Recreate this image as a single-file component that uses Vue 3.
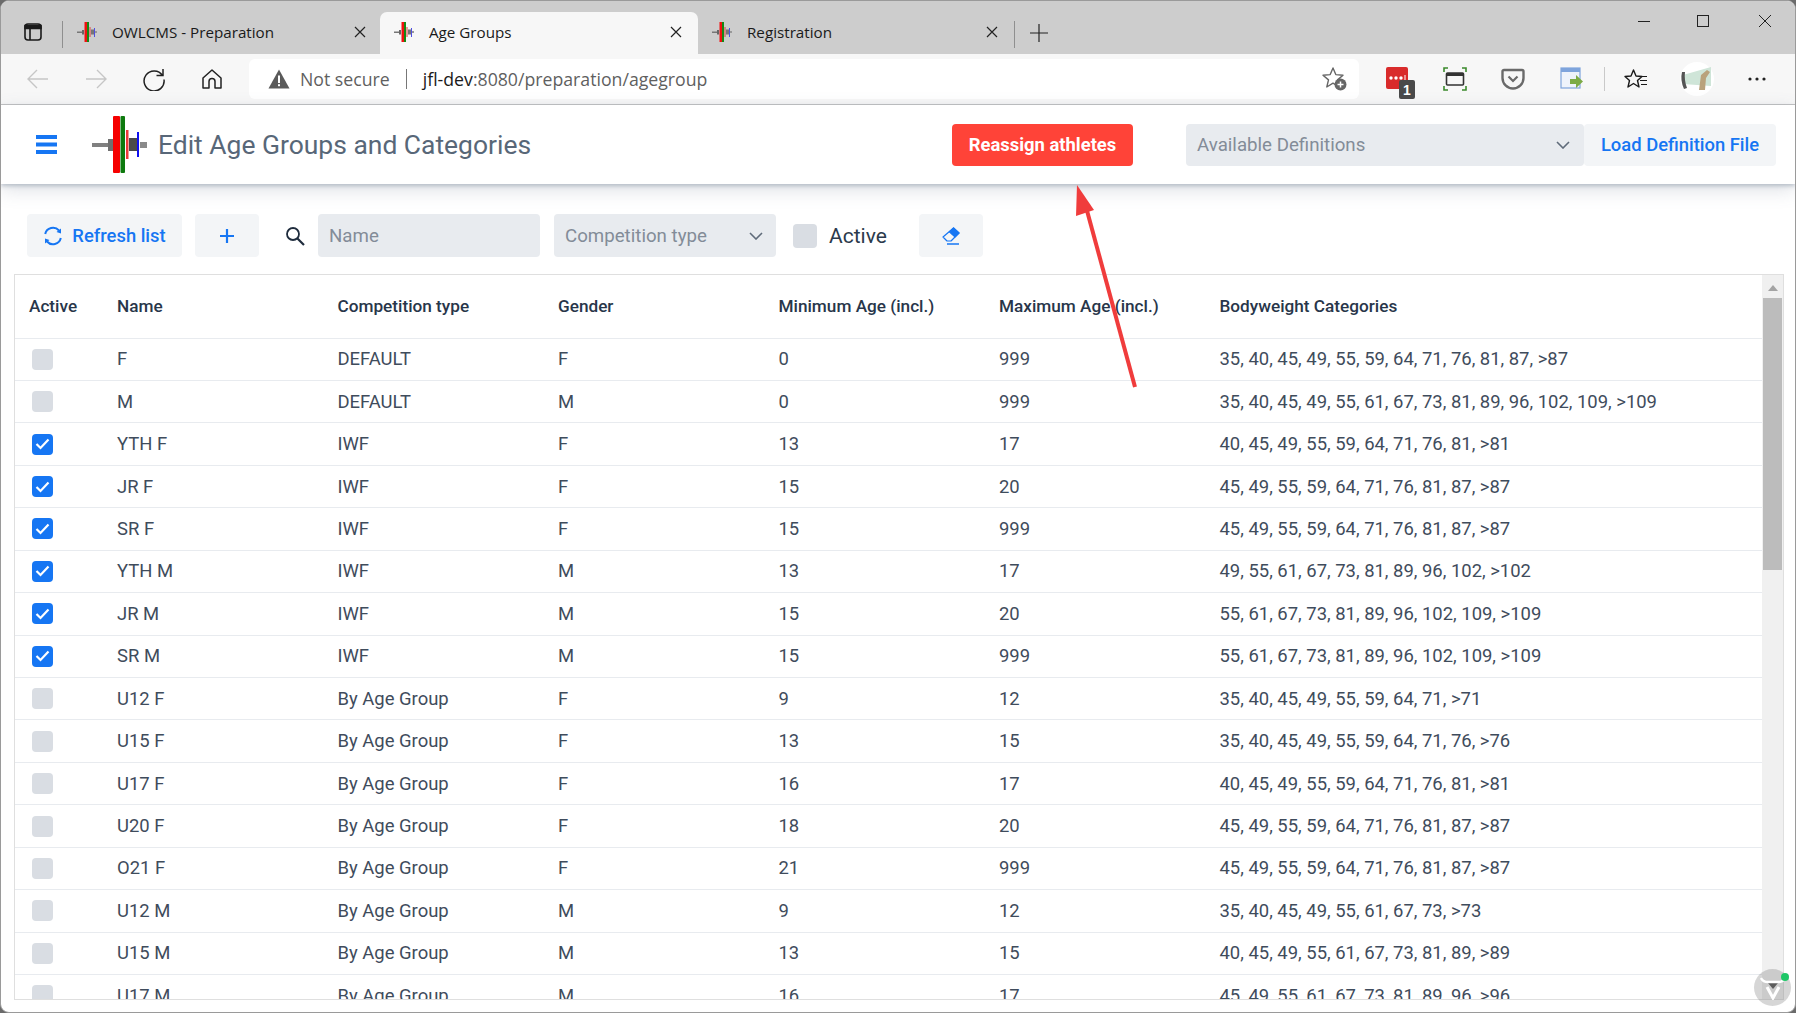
<script setup>
const tabs = [
  { title: 'OWLCMS - Preparation', active: false },
  { title: 'Age Groups', active: true },
  { title: 'Registration', active: false }
]

const columns = ['Active', 'Name', 'Competition type', 'Gender', 'Minimum Age (incl.)', 'Maximum Age (incl.)', 'Bodyweight Categories']

const rows = [
  { active: false, name: 'F', type: 'DEFAULT', gender: 'F', min: 0, max: 999, cats: '35, 40, 45, 49, 55, 59, 64, 71, 76, 81, 87, >87' },
  { active: false, name: 'M', type: 'DEFAULT', gender: 'M', min: 0, max: 999, cats: '35, 40, 45, 49, 55, 61, 67, 73, 81, 89, 96, 102, 109, >109' },
  { active: true, name: 'YTH F', type: 'IWF', gender: 'F', min: 13, max: 17, cats: '40, 45, 49, 55, 59, 64, 71, 76, 81, >81' },
  { active: true, name: 'JR F', type: 'IWF', gender: 'F', min: 15, max: 20, cats: '45, 49, 55, 59, 64, 71, 76, 81, 87, >87' },
  { active: true, name: 'SR F', type: 'IWF', gender: 'F', min: 15, max: 999, cats: '45, 49, 55, 59, 64, 71, 76, 81, 87, >87' },
  { active: true, name: 'YTH M', type: 'IWF', gender: 'M', min: 13, max: 17, cats: '49, 55, 61, 67, 73, 81, 89, 96, 102, >102' },
  { active: true, name: 'JR M', type: 'IWF', gender: 'M', min: 15, max: 20, cats: '55, 61, 67, 73, 81, 89, 96, 102, 109, >109' },
  { active: true, name: 'SR M', type: 'IWF', gender: 'M', min: 15, max: 999, cats: '55, 61, 67, 73, 81, 89, 96, 102, 109, >109' },
  { active: false, name: 'U12 F', type: 'By Age Group', gender: 'F', min: 9, max: 12, cats: '35, 40, 45, 49, 55, 59, 64, 71, >71' },
  { active: false, name: 'U15 F', type: 'By Age Group', gender: 'F', min: 13, max: 15, cats: '35, 40, 45, 49, 55, 59, 64, 71, 76, >76' },
  { active: false, name: 'U17 F', type: 'By Age Group', gender: 'F', min: 16, max: 17, cats: '40, 45, 49, 55, 59, 64, 71, 76, 81, >81' },
  { active: false, name: 'U20 F', type: 'By Age Group', gender: 'F', min: 18, max: 20, cats: '45, 49, 55, 59, 64, 71, 76, 81, 87, >87' },
  { active: false, name: 'O21 F', type: 'By Age Group', gender: 'F', min: 21, max: 999, cats: '45, 49, 55, 59, 64, 71, 76, 81, 87, >87' },
  { active: false, name: 'U12 M', type: 'By Age Group', gender: 'M', min: 9, max: 12, cats: '35, 40, 45, 49, 55, 61, 67, 73, >73' },
  { active: false, name: 'U15 M', type: 'By Age Group', gender: 'M', min: 13, max: 15, cats: '40, 45, 49, 55, 61, 67, 73, 81, 89, >89' },
  { active: false, name: 'U17 M', type: 'By Age Group', gender: 'M', min: 16, max: 17, cats: '45, 49, 55, 61, 67, 73, 81, 89, 96, >96' }
]
</script>

<template>
  <div class="window">
    <!-- tab strip -->
    <div class="tabstrip">
      <div class="sidebar-btn">
        <svg width="20" height="20" viewBox="0 0 20 20" fill="none" stroke="#1a1a1a" stroke-width="1.6">
          <rect x="2" y="2" width="16" height="16" rx="3" />
          <path d="M2 3.5 h16 v3 h-16z" fill="#1a1a1a" />
          <path d="M7 6 v12" />
        </svg>
      </div>
      <div class="tab-sep"></div>
      <div v-for="tab in tabs" :key="tab.title" class="tab" :class="{ active: tab.active }">
        <svg class="favicon" width="20" height="20" viewBox="0 0 20 20">
          <rect x="0" y="9.5" width="7" height="1.5" fill="#777" />
          <rect x="5" y="8" width="2" height="4.5" fill="#666" />
          <rect x="7.5" y="0" width="2.5" height="20" fill="#f01010" />
          <rect x="10" y="0" width="2" height="20" fill="#148a14" />
          <rect x="12.5" y="5" width="1" height="10" fill="#e04040" />
          <rect x="14" y="7.5" width="3" height="5" fill="#777" />
          <rect x="17" y="6" width="1" height="9" fill="#5050e0" />
          <rect x="18" y="9" width="2" height="2" fill="#999" />
        </svg>
        <span class="tab-title">{{ tab.title }}</span>
        <svg class="tab-close" width="12" height="12" viewBox="0 0 12 12" stroke="#222" stroke-width="1.2">
          <path d="M1 1 L11 11 M11 1 L1 11" />
        </svg>
      </div>
      <div class="tab-sep last"></div>
      <svg class="newtab" width="18" height="18" viewBox="0 0 18 18" stroke="#222" stroke-width="1.2">
        <path d="M9 0 V18 M0 9 H18" />
      </svg>
      <div class="winctl">
        <svg width="12" height="12" viewBox="0 0 12 12" stroke="#222" stroke-width="1"><path d="M0 6.5 H12" /></svg>
        <svg class="win-max" width="12" height="12" viewBox="0 0 12 12" fill="none" stroke="#222" stroke-width="1"><rect x="0.5" y="0.5" width="11" height="11" /></svg>
        <svg class="win-close" width="14" height="14" viewBox="0 0 14 14" stroke="#222" stroke-width="1"><path d="M1 1 L13 13 M13 1 L1 13" /></svg>
      </div>
    </div>

    <!-- address bar -->
    <div class="toolbar">
      <div class="nav-icons">
        <svg width="24" height="24" viewBox="0 0 24 24" fill="none" stroke="#c6c6c6" stroke-width="1.4"><path d="M22 12 H2 M11 3 L2 12 L11 21" /></svg>
        <svg width="24" height="24" viewBox="0 0 24 24" fill="none" stroke="#c6c6c6" stroke-width="1.4"><path d="M2 12 H22 M13 3 L22 12 L13 21" /></svg>
        <svg width="24" height="24" viewBox="0 0 24 24" fill="none" stroke="#222" stroke-width="1.5"><path d="M20.5 8.5 A10 10 0 1 0 22 12.5 M21 2 V8.5 H14.5" /></svg>
        <svg width="24" height="24" viewBox="0 0 24 24" fill="none" stroke="#222" stroke-width="1.5"><path d="M3 11 L12 3 L21 11 V21 H15 V14.5 A3 3 0 0 0 9 14.5 V21 H3 Z" stroke-linejoin="round" /></svg>
      </div>
      <div class="omnibox">
        <svg class="warn" width="22" height="20" viewBox="0 0 22 20">
          <path d="M11 0.5 L21.5 19.5 H0.5 Z" fill="#5a5a5a" />
          <rect x="10" y="6.5" width="2" height="7.5" fill="#fff" />
          <rect x="10" y="15.2" width="2" height="2" fill="#fff" />
        </svg>
        <span class="not-secure">Not secure</span>
        <span class="omni-sep"></span>
        <span class="url"><b>jfl-dev</b>:8080/preparation/agegroup</span>
        <svg class="star-add" width="26" height="26" viewBox="0 0 26 26">
          <path d="M11 2 L13.8 8.6 L21 9.2 L15.5 13.9 L17.2 21 L11 17.2 L4.8 21 L6.5 13.9 L1 9.2 L8.2 8.6 Z" fill="#fff" stroke="#666" stroke-width="1.4" stroke-linejoin="round" />
          <circle cx="18.5" cy="18.5" r="6" fill="#666" />
          <path d="M18.5 15.5 V21.5 M15.5 18.5 H21.5" stroke="#fff" stroke-width="1.5" />
        </svg>
      </div>
      <div class="ext-icons">
        <svg class="ext-red" width="30" height="32" viewBox="0 0 30 32">
          <rect x="0" y="0" width="22" height="22" rx="2" fill="#d92b2b" />
          <circle cx="5" cy="11" r="1.7" fill="#fff" />
          <circle cx="10" cy="11" r="1.7" fill="#fff" />
          <circle cx="15" cy="11" r="1.7" fill="#fff" />
          <rect x="18.5" y="8" width="1" height="6" fill="#fff" />
          <rect x="13" y="13" width="16" height="19" rx="2" fill="#4a4a4a" />
          <text x="21" y="28" class="ext-badge">1</text>
        </svg>
        <svg class="ext-green" width="24" height="24" viewBox="0 0 24 24" fill="none">
          <path d="M1 5 V1 H5 M19 1 H23 V5 M23 19 V23 H19 M5 23 H1 V19" stroke="#3b8a2c" stroke-width="1.6" />
          <rect x="3.5" y="6" width="17" height="12" rx="1" stroke="#333" stroke-width="1.6" />
          <rect x="3.5" y="6" width="17" height="3" fill="#333" />
        </svg>
        <svg class="ext-pocket" width="24" height="24" viewBox="0 0 24 24" fill="none">
          <path d="M3 3 H21 A1.5 1.5 0 0 1 22.5 4.5 V11 A10.5 10.5 0 0 1 1.5 11 V4.5 A1.5 1.5 0 0 1 3 3 Z" stroke="#6a6a6a" stroke-width="2.4" />
          <path d="M7.5 9.5 L12 14 L16.5 9.5" stroke="#6a6a6a" stroke-width="2.2" />
        </svg>
        <svg class="ext-arrow" width="24" height="24" viewBox="0 0 24 24">
          <rect x="1" y="1" width="19" height="20" fill="#eef3fb" stroke="#7ea4dc" stroke-width="1.2" />
          <rect x="1" y="1" width="19" height="4" fill="#7ea4dc" />
          <path d="M10 12 H16 V8 L23 14.5 L16 21 V17 H10 Z" fill="#7cab46" />
        </svg>
        <span class="ext-sep"></span>
        <svg class="ext-fav" width="24" height="24" viewBox="0 0 24 24" fill="none" stroke="#1a1a1a" stroke-width="1.4" stroke-linejoin="round">
          <path d="M9.5 3 L12 9 L18 9.5 L13.5 13.5 L15 20 L9.5 16.5 L4 20 L5.5 13.5 L1 9.5 L7 9 Z" />
          <path d="M17 9.5 H23 M16 13.5 H23 M17 17.5 H23" stroke-width="1.2" />
        </svg>
        <svg class="ext-avatar" width="34" height="34" viewBox="0 0 34 34">
          <circle cx="17" cy="17" r="17" fill="#fff" />
          <path d="M3 13 L31 5 V24 L3 22 Z" fill="#cfe5d8" />
          <path d="M2 10 Q0 18 4 27 L7 26 Q4 18 5 10 Z" fill="#555" />
          <path d="M19 28 L21 13 L27 8 L30 10 L26 16 L25 28 Z" fill="#b9a27c" />
        </svg>
        <svg class="ext-more" width="18" height="4" viewBox="0 0 18 4" fill="#222">
          <circle cx="2" cy="2" r="1.6" /><circle cx="9" cy="2" r="1.6" /><circle cx="16" cy="2" r="1.6" />
        </svg>
      </div>
    </div>

    <!-- app page -->
    <div class="page">
      <header class="app-header">
        <svg class="hamburger" width="21" height="19" viewBox="0 0 21 19" fill="#1676f3">
          <rect width="21" height="4" /><rect y="7.5" width="21" height="4" /><rect y="15" width="21" height="4" />
        </svg>
        <svg class="logo" width="55" height="57" viewBox="0 0 55 57">
          <rect x="0" y="27" width="16" height="4" fill="#808080" />
          <rect x="16" y="23" width="5" height="12" fill="#707070" />
          <rect x="21" y="0" width="7" height="57" rx="1" fill="#f60000" />
          <rect x="28.5" y="0" width="4.5" height="57" rx="1" fill="#0e7a0e" />
          <rect x="34" y="14" width="2.5" height="29" fill="#ee3a3a" />
          <rect x="37" y="22" width="8" height="13" fill="#4a4a4a" />
          <rect x="45" y="16" width="2" height="25" fill="#1010f0" />
          <rect x="48" y="26" width="7" height="6" fill="#8a8a8a" />
        </svg>
        <h1 class="app-title">Edit Age Groups and Categories</h1>
        <button class="reassign">Reassign athletes</button>
        <div class="select definitions">
          <span>Available Definitions</span>
          <svg width="14" height="8" viewBox="0 0 14 8" fill="none" stroke="#5f6b7a" stroke-width="1.6"><path d="M1 1 L7 7 L13 1" /></svg>
        </div>
        <button class="btn load">Load Definition File</button>
      </header>

      <div class="filters">
        <button class="btn refresh">
          <svg width="20" height="20" viewBox="0 0 20 20" fill="none" stroke="#1676f3" stroke-width="2">
            <path d="M2.2 8 A8 8 0 0 1 16 4.5 M17.8 12 A8 8 0 0 1 4 15.5" />
            <path d="M13.5 6 L18 7.5 L18 2.5 Z M6.5 14 L2 12.5 L2 17.5 Z" fill="#1676f3" stroke="none" />
          </svg>
          Refresh list
        </button>
        <button class="btn plus">
          <svg width="14" height="14" viewBox="0 0 14 14" stroke="#1676f3" stroke-width="2.2"><path d="M7 0 V14 M0 7 H14" /></svg>
        </button>
        <svg class="search" width="20" height="20" viewBox="0 0 20 20" fill="none" stroke="#1f2c3d" stroke-width="1.8">
          <circle cx="8" cy="8" r="6" /><path d="M12.5 12.5 L19 19" stroke-width="2.2" />
        </svg>
        <div class="field name-field">Name</div>
        <div class="select comp-field">
          <span>Competition type</span>
          <svg width="14" height="8" viewBox="0 0 14 8" fill="none" stroke="#5f6b7a" stroke-width="1.6"><path d="M1 1 L7 7 L13 1" /></svg>
        </div>
        <span class="check filter-check"></span>
        <span class="active-label">Active</span>
        <button class="btn eraser">
          <svg width="18" height="18" viewBox="0 0 18 18" fill="none" stroke="#1676f3" stroke-width="1.2">
            <path d="M11.5 1 L17 6 L9 14 H5 L1 10 Z" stroke-linejoin="round" />
            <path d="M11.5 1 L17 6 L13 10 L7.5 5 Z" fill="#1676f3" />
            <path d="M5 17 H17" stroke-width="1.4" />
          </svg>
        </button>
      </div>

      <div class="grid-wrap">
        <div class="grid">
          <div class="grid-row head">
            <div v-for="col in columns" :key="col" class="cell">{{ col }}</div>
          </div>
          <div v-for="row in rows" :key="row.name" class="grid-row">
            <div class="cell">
              <span class="check" :class="{ on: row.active }">
                <svg v-if="row.active" width="15" height="12" viewBox="0 0 15 12" fill="none" stroke="#fff" stroke-width="2.2"><path d="M1.5 6 L5.5 10 L13.5 1.5" /></svg>
              </span>
            </div>
            <div class="cell">{{ row.name }}</div>
            <div class="cell">{{ row.type }}</div>
            <div class="cell">{{ row.gender }}</div>
            <div class="cell">{{ row.min }}</div>
            <div class="cell">{{ row.max }}</div>
            <div class="cell">{{ row.cats }}</div>
          </div>
        </div>
        <div class="scrollbar">
          <div class="arrow-up"></div>
          <div class="thumb"></div>
          <div class="arrow-down"></div>
        </div>
      </div>
    </div>

    <!-- red annotation arrow drawn over the page -->
    <svg class="annotation" width="80" height="210" viewBox="0 0 80 210">
      <path d="M67 204 L18 24" stroke="#f03c3c" stroke-width="4" fill="none" />
      <path d="M9 2 L26 27 L8 33 Z" fill="#f03c3c" />
    </svg>

    <!-- vaadin dev tools badge -->
    <div class="devtools">
      <span class="dot"></span>
      <svg width="26" height="24" viewBox="0 0 26 24" fill="none" stroke="#fff" stroke-width="3">
        <path d="M1 2 Q3 6 8 6 H18 Q23 6 25 2" stroke-width="2.4" />
        <path d="M7 11 L13 22 L19 11" />
      </svg>
    </div>
  </div>
</template>

<style scoped>
.window {
  position: relative;
  width: 1796px;
  height: 1013px;
  box-sizing: border-box;
  display: flex;
  flex-direction: column;
  overflow: hidden;
  background: #fff;
  border: 1px solid #9a9a9a;
  border-radius: 9px;
  font-family: Roboto, sans-serif;
}

/* browser chrome */
.tabstrip {
  height: 53px;
  flex: none;
  display: flex;
  align-items: flex-end;
  background: #cdcdcd;
  font-family: "Open Sans", sans-serif;
  font-size: 15.2px;
  color: #1a1a1a;
}
.sidebar-btn {
  width: 20px;
  height: 20px;
  margin: 0 19px 12px 22px;
}
.tab-sep {
  width: 1px;
  height: 27px;
  margin-bottom: 6px;
  background: #8f8f8f;
}
.tab-sep.last {
  margin-left: -1px;
}
.tab {
  width: 317px;
  height: 42px;
  box-sizing: border-box;
  display: flex;
  align-items: center;
  padding: 0 14px 2px 14px;
  border-radius: 7px 7px 0 0;
}
.tab:nth-child(5) {
  padding-right: 17px;
}
.tab.active {
  width: 318px;
  padding-right: 16px;
  background: #f7f7f7;
}
.favicon {
  flex: none;
}
.tab-title {
  flex: 1;
  margin-left: 15px;
}
.tab-close {
  flex: none;
}
.newtab {
  margin: 0 0 12px 15px;
}
.winctl {
  margin-left: auto;
  align-self: flex-start;
  display: flex;
  align-items: center;
  margin-top: 13px;
  margin-right: 23px;
}
.win-max {
  margin-left: 47px;
}
.win-close {
  margin-left: 49px;
}
.toolbar {
  height: 51px;
  flex: none;
  box-sizing: border-box;
  display: flex;
  align-items: center;
  background: #f7f7f7;
  border-bottom: 1px solid #c4c4c4;
}
.nav-icons {
  display: flex;
  gap: 34px;
  margin-left: 25px;
  align-items: center;
}
.omnibox {
  width: 1110px;
  height: 40px;
  margin-left: 25px;
  box-sizing: border-box;
  display: flex;
  align-items: center;
  padding: 0 11px 0 19px;
  background: #fff;
  border-radius: 6px;
  font-family: "Open Sans", sans-serif;
  font-size: 17.7px;
  color: #5f5f5f;
}
.not-secure {
  margin-left: 10px;
}
.omni-sep {
  width: 1px;
  height: 20px;
  margin: 0 16px;
  background: #777;
}
.url b {
  font-weight: 400;
  color: #1a1a1a;
}
.star-add {
  margin-left: auto;
}
.ext-icons {
  display: flex;
  align-items: center;
}
.ext-red {
  margin: 8px 0 0 26.5px;
}
.ext-green {
  margin-left: 27.5px;
}
.ext-pocket {
  margin-left: 34px;
}
.ext-arrow {
  margin-left: 35px;
}
.ext-sep {
  width: 1px;
  height: 24px;
  margin-left: 20px;
  background: #c9c9c9;
}
.ext-fav {
  margin-left: 18.5px;
}
.ext-avatar {
  margin-left: 32.5px;
}
.ext-more {
  margin-left: 33.5px;
}
.ext-badge {
  font-family: "Liberation Sans", sans-serif;
  font-size: 14px;
  font-weight: 700;
  fill: #fff;
  text-anchor: middle;
}

/* app */
.page {
  flex: 1;
  min-height: 0;
  display: flex;
  flex-direction: column;
}
.app-header {
  height: 79px;
  flex: none;
  box-sizing: border-box;
  display: flex;
  align-items: center;
  background: #fff;
  box-shadow: 0 2px 4px rgba(90, 105, 130, 0.35), 0 6px 18px rgba(90, 105, 130, 0.2);
  position: relative;
  padding-left: 35px;
}
.hamburger {
  flex: none;
}
.logo {
  flex: none;
  margin-left: 35px;
}
.app-title {
  margin: 0 0 0 11px;
  font-size: 26.45px;
  font-weight: 400;
  color: #586778;
  white-space: nowrap;
}
.reassign {
  width: 181px;
  height: 42px;
  margin-left: auto;
  border: none;
  border-radius: 4px;
  background: #ff4338;
  color: #fff;
  font-family: Roboto, sans-serif;
  font-size: 18.4px;
  font-weight: 700;
}
.select,
.field {
  box-sizing: border-box;
  display: flex;
  align-items: center;
  justify-content: space-between;
  background: #e8ebef;
  border-radius: 4px;
  color: #838c98;
  font-size: 18.7px;
}
.definitions {
  width: 398px;
  height: 42px;
  margin-left: 53px;
  padding: 0 14px 0 11px;
}
.btn {
  display: flex;
  align-items: center;
  justify-content: center;
  border: none;
  border-radius: 4px;
  background: #f3f5f7;
  color: #1676f3;
  font-family: Roboto, sans-serif;
  font-size: 18.4px;
  font-weight: 500;
  padding: 0;
}
.load {
  width: 192px;
  height: 42px;
  margin-right: 19px;
}
.filters {
  flex: none;
  height: 43px;
  margin-top: 30px;
  padding-left: 26px;
  display: flex;
  align-items: center;
}
.filters .btn,
.filters .select,
.filters .field {
  height: 43px;
}
.refresh {
  width: 155px;
  gap: 9px;
}
.plus {
  width: 64px;
  margin-left: 13px;
}
.search {
  margin-left: 26px;
}
.name-field {
  width: 222px;
  margin-left: 13px;
  padding-left: 11px;
}
.comp-field {
  width: 222px;
  margin-left: 14px;
  padding: 0 13px 0 11px;
}
.active-label {
  margin-left: 12px;
  font-size: 21px;
  color: #2b3a4c;
}
.eraser {
  width: 64px;
  margin-left: 32px;
}
.grid-wrap {
  flex: none;
  height: 726px;
  margin: 17px 11px 0 13px;
  box-sizing: border-box;
  display: flex;
  border: 1px solid #dfdfdf;
  overflow: hidden;
}
.grid {
  flex: 1;
  min-width: 0;
}
.grid-row {
  height: 42.45px;
  box-sizing: border-box;
  display: grid;
  grid-template-columns: 86px repeat(5, 220.5px) 1fr;
  align-items: center;
  border-bottom: 1px solid #e8ebef;
  color: #3f4c5c;
  font-size: 18.45px;
}
.grid-row.head {
  height: 63.5px;
  color: #28364a;
  font-size: 17.2px;
  font-weight: 500;
}
.cell {
  padding-left: 16px;
  white-space: nowrap;
  display: flex;
  align-items: center;
}
.grid-row .cell:first-child {
  padding-left: 14px;
}
.grid-row:not(.head) .cell:first-child {
  padding-left: 17px;
}
.check {
  width: 21px;
  height: 21px;
  display: flex;
  align-items: center;
  justify-content: center;
  flex: none;
  background: #d9dde3;
  border-radius: 4px;
}
.check.on {
  background: #1676f3;
}
.filter-check {
  margin-left: 17px;
  width: 24px;
  height: 24px;
}
.scrollbar {
  width: 21px;
  flex: none;
  display: flex;
  flex-direction: column;
  background: #f0f0f0;
}
.arrow-up {
  width: 0;
  height: 0;
  margin: 10px auto 7px;
  border: 5px solid transparent;
  border-top: none;
  border-bottom: 6px solid #a3a3a3;
}
.thumb {
  height: 272px;
  margin: 0 1px;
  background: #bcbcbc;
}
.arrow-down {
  width: 0;
  height: 0;
  margin: auto auto 10px;
  border: 5px solid transparent;
  border-bottom: none;
  border-top: 6px solid #505050;
}
.annotation {
  position: absolute;
  left: 1067px;
  top: 182px;
}
.devtools {
  position: absolute;
  left: 1753px;
  top: 968px;
  width: 37px;
  height: 37px;
  display: flex;
  align-items: center;
  justify-content: center;
  border-radius: 50%;
  background: rgba(120, 120, 120, 0.3);
}
.dot {
  position: absolute;
  right: 2px;
  top: 4px;
  width: 8px;
  height: 8px;
  border-radius: 50%;
  background: #1fc768;
}
</style>

<style>
html,
body {
  margin: 0;
  background: #6b6b6b;
}
</style>
